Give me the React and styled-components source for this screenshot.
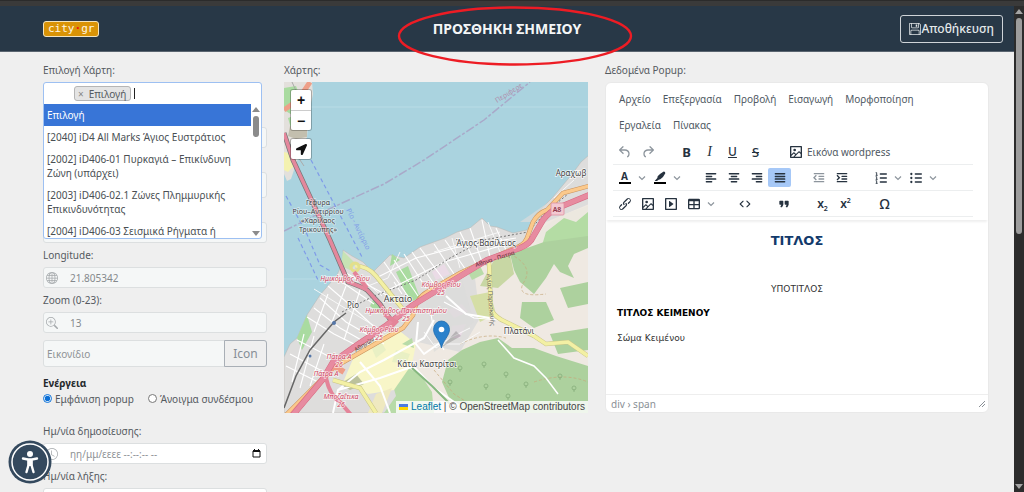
import React from "react";
import styled, { createGlobalStyle } from "styled-components";
import { BsGlobe, BsZoomIn, BsClock, BsFloppy } from "react-icons/bs";
import { FaLocationArrow } from "react-icons/fa";

const ui = '"Noto Sans", "Open Sans", sans-serif';

const Global = createGlobalStyle`
  *, *::before, *::after { box-sizing: border-box; }
  body { margin: 0; background: #efefef; color: #555a5f; font: 10px/16px ${ui}; }
  button, input { font: inherit; color: inherit; }
  button { cursor: pointer; }
`;

/* ---------- page frame ---------- */
const Shell = styled.div`
  height: 100vh;
  display: flex;
  flex-direction: column;
  overflow: hidden;
`;
const WindowEdge = styled.div`
  flex: none;
  height: 6px;
  background: #3a3a3a;
  border-top: 1px solid #2b2b2b;
`;
const Viewport = styled.div`
  flex: 1;
  min-height: 0;
  display: flex;
`;
const Page = styled.div`
  flex: 1;
  min-width: 0;
  overflow: hidden;
`;
const Scrollbar = styled.div`
  flex: none;
  width: 10px;
  padding: 3px 2px;
  background: #2c2c2c;
  display: flex;
  flex-direction: column;
  align-items: center;
  gap: 4px;
`;
const Thumb = styled.div`
  width: 6px;
  height: ${(p) => p.$size};
  border-radius: 3px;
  background: ${(p) => p.$color};
`;
const Arrow = styled.span`
  width: 0;
  height: 0;
  border: 4px solid transparent;
  border-top-width: ${(p) => (p.$up ? 0 : 5)}px;
  border-bottom-width: ${(p) => (p.$up ? 5 : 0)}px;
  border-top-color: ${(p) => p.$color};
  border-bottom-color: ${(p) => p.$color};
  margin-top: ${(p) => (p.$up ? 0 : "auto")};
`;

/* ---------- header ---------- */
const Header = styled.header`
  position: relative;
  display: grid;
  grid-template-columns: 1fr auto 1fr;
  align-items: center;
  height: 46px;
  padding: 0 11px 0 43px;
  background: #283847;
  border-bottom: 1px solid #5a6570;
  color: #f4f6f7;
`;
const Logo = styled.a`
  justify-self: start;
  display: flex;
  align-items: center;
  height: 16px;
  padding: 0 4px;
  border: 1px solid #f3e3bd;
  border-radius: 3px;
  background: #d99306;
  color: #fff6e0;
  font: 11px/14px "DejaVu Sans Mono", monospace;
  text-decoration: none;
  i { color: #f01010; font-style: normal; font-weight: 700; }
`;
const Title = styled.h1`
  margin: 0 32px 0 0;
  font-size: 14px;
  line-height: 20px;
  font-weight: 700;
`;
const SaveButton = styled.button`
  justify-self: end;
  display: flex;
  align-items: center;
  height: 28px;
  padding: 0 8px;
  border: 1px solid #cfd4d8;
  border-radius: 3px;
  background: transparent;
  color: #e4e8ea;
  font-size: 12px;
  font-weight: 500;
`;
const Ring = styled.svg`
  position: absolute;
  z-index: 5;
  top: 0;
  left: calc(50% - 110px);
  width: 236px;
  height: 62px;
  pointer-events: none;
`;

/* ---------- form column ---------- */
const Columns = styled.main`
  display: grid;
  grid-template-columns: minmax(0, 224fr) minmax(0, 304fr) minmax(0, 384fr);
  gap: 17px;
  align-items: start;
  padding: 10px 25px 24px 43px;
`;
const Stack = styled.div`
  display: flex;
  flex-direction: column;
  gap: 4px;
`;
const Caption = styled.label`
  display: block;
  height: 16px;
`;
const Control = styled.div`
  display: flex;
  align-items: center;
  height: ${(p) => (p.$tall ? 26 : 21)}px;
  padding: 0 5px 0 2px;
  border: 1px solid #dcdfe0;
  border-radius: 3px;
  background: ${(p) => (p.$plain ? "#fff" : "#f5f7f7")};
  color: #a4a8ab;
`;
const TextInput = styled.input`
  flex: 1;
  min-width: 0;
  height: 100%;
  padding: 0 0 0 ${(p) => (p.$icon ? 12 : 3)}px;
  border: 0;
  outline: 0;
  background: transparent;
  color: #85898c;
  &::placeholder { color: #8f9396; opacity: 1; }
`;
const IconGroup = styled.div`
  display: flex;
  height: 27px;
  margin-top: 3px;
  border: 1px solid #dcdfe0;
  border-radius: 3px;
  background: #f5f7f7;
`;
const IconButton = styled.button`
  width: 43px;
  margin: -1px;
  border: 1px solid #a9afb6;
  border-radius: 0 3px 3px 0;
  padding: 0;
  background: #efefef;
  color: #868e96;
  font-size: 12px;
`;
const Choice = styled.fieldset`
  margin: 4px 0 12px;
  padding: 0;
  border: 0;
  legend { height: 16px; padding: 0; font-weight: 700; color: #25292c; }
`;
const Options = styled.div`
  display: flex;
  gap: 14px;
  label { display: flex; align-items: center; height: 16px; white-space: nowrap; }
  input { width: 9px; height: 9px; margin: 0 3px 2px 0; accent-color: #0b6fd6; }
`;

/* ---------- open multi select ---------- */
const Anchor = styled.div`
  position: relative;
  height: 21px;
`;
const Combo = styled.div`
  position: absolute;
  z-index: 3;
  top: 0;
  left: 0;
  right: 5px;
  border: 1px solid #9dc0f2;
  border-radius: 3px;
  background: #fff;
`;
const ComboField = styled.div`
  display: flex;
  align-items: center;
  height: 21px;
  padding-left: 30px;
`;
const Chip = styled.span`
  display: flex;
  align-items: center;
  gap: 5px;
  height: 15px;
  padding: 0 4px 0 3px;
  border: 1px solid #b5b5b5;
  border-radius: 3px;
  background: #e4e4e4;
  button { padding: 0; border: 0; background: none; color: #888; line-height: 12px; }
`;
const Caret = styled.span`
  width: 1px;
  height: 11px;
  margin-left: 3px;
  background: #222;
`;
const Results = styled.div`
  display: flex;
  height: 134px;
`;
const List = styled.ul`
  flex: 1;
  min-width: 0;
  margin: 0;
  padding: 0;
  overflow: hidden;
  list-style: none;
`;
const Item = styled.li`
  padding: 4px 3px 4px 3px;
  line-height: 14px;
  background: ${(p) => (p.$active ? "#3875d7" : "transparent")};
  color: ${(p) => (p.$active ? "#fff" : "#4a4f54")};
`;
const ListScroll = styled.div`
  width: 10px;
  padding: 3px 0 2px;
  display: flex;
  flex-direction: column;
  align-items: center;
  gap: 4px;
`;

/* ---------- map ---------- */
const MapFrame = styled.div`
  position: relative;
  height: 331px;
  overflow: hidden;
  background: #aad3df;
  > svg { display: block; width: 100%; height: 100%; }
`;
const MapControls = styled.div`
  position: absolute;
  top: 8px;
  left: 7px;
  display: flex;
  flex-direction: column;
  gap: 9px;
`;
const MapBar = styled.div`
  display: flex;
  flex-direction: column;
  border-radius: 2px;
  overflow: hidden;
  box-shadow: 0 0 0 1px rgba(0, 0, 0, 0.25);
  button {
    display: grid;
    place-items: center;
    width: 20px;
    height: 20px;
    padding: 0;
    border: 0;
    background: #fff;
    color: #111;
    font: 700 14px/20px "Liberation Sans", sans-serif;
  }
  button + button { border-top: 1px solid #ccc; }
`;
const Attribution = styled.div`
  position: absolute;
  right: 0;
  bottom: 0;
  display: flex;
  align-items: center;
  gap: 3px;
  height: 12px;
  padding: 0 3px;
  background: rgba(255, 255, 255, 0.8);
  color: #444;
  font: 10px/12px "Liberation Sans", sans-serif;
  white-space: nowrap;
  a { color: #0078a8; text-decoration: none; }
`;

/* ---------- editor ---------- */
const Editor = styled.section`
  border: 1px solid #e9e9e9;
  border-radius: 6px;
  background: #fff;
  color: #4f5963;
`;
const EditorHead = styled.div`
  padding: 3px 15px 3px 7px;
  box-shadow: 0 3px 2px -1px #efefef;
`;
const MenuBar = styled.div`
  display: flex;
  flex-wrap: wrap;
  margin-bottom: 1px;
  padding-right: 36px;
  button { height: 26px; padding: 0 6px; border: 0; background: none; }
`;
const ToolRow = styled.div`
  display: flex;
  align-items: center;
  gap: 16px;
  height: 26px;
  border-bottom: 1px solid #eceeef;
`;
const ToolGroup = styled.div`
  display: flex;
  align-items: center;
`;
const Tool = styled.button`
  display: flex;
  align-items: center;
  justify-content: center;
  gap: 3px;
  min-width: ${(p) => (p.$arrow ? 12 : 23)}px;
  height: 19px;
  padding: ${(p) => (p.$wide ? "0 5px" : 0)};
  border: 0;
  border-radius: 2px;
  background: ${(p) => (p.$on ? "#a6c8f7" : "transparent")};
  color: ${(p) => (p.$dim || p.$arrow ? "#8d959d" : "#26323f")};
  white-space: nowrap;
  > span { color: #4f5963; }
`;
const Glyph = styled.b`
  font: ${(p) => p.$font || `700 13px/16px ${ui}`};
  text-decoration: ${(p) => p.$line || "none"};
  sub, sup { font-size: 7px; line-height: 0; }
`;
const ColorMark = styled.b`
  width: 12px;
  border-bottom: 2px solid #000;
  font: 700 10px/11px ${ui};
`;
const Canvas = styled.div`
  min-height: 174px;
  padding: 13px 11px 10px;
  color: #333;
  font: 9px/16px "DejaVu Sans", sans-serif;
  h2 { margin: 0 0 32px; color: #123a6b; font-size: 13px; line-height: 16px; text-align: center; }
  p { margin: 0 0 8px; }
  p:first-of-type { text-align: center; }
  h3 { margin: 0 0 9px; color: #000; font-size: 9px; line-height: 16px; }
`;
const StatusBar = styled.div`
  display: flex;
  justify-content: space-between;
  align-items: center;
  height: 18px;
  padding: 0 2px 0 5px;
  border-top: 1px solid #eee;
  color: #8a9096;
`;

const AccessButton = styled.button`
  position: fixed;
  z-index: 10;
  left: 8px;
  bottom: 8px;
  width: 44px;
  height: 44px;
  padding: 0;
  border: 0;
  border-radius: 50%;
  background: none;
  svg { display: block; }
`;

/* ---------- icons ---------- */
const Icon = ({ children, size = 16 }) => (
  <svg width={size} height={size} viewBox="0 0 24 24" fill="currentColor" aria-hidden="true">
    {children}
  </svg>
);
const Chevron = () => (
  <svg width="8" height="8" viewBox="0 0 8 8" fill="none" stroke="currentColor" strokeWidth="1.2" aria-hidden="true">
    <path d="M1 2.5 4 5.5 7 2.5" />
  </svg>
);
const Bars = ({ rows }) => (
  <Icon>
    {rows.map(([x, w], i) => (
      <rect key={i} x={x} y={4.5 + i * 4} width={w} height="2.2" rx="1" />
    ))}
  </Icon>
);
const UNDO =
  "M6.4 8H12c3.7 0 6.2 2 6.8 5.1.6 2.7-.4 5.6-2.3 6.8a1 1 0 0 1-1-1.8c1.1-.6 1.8-2.7 1.4-4.6-.5-2.1-2.1-3.5-4.9-3.5H6.4l3.3 3.3a1 1 0 1 1-1.4 1.4l-5-5a1 1 0 0 1 0-1.4l5-5a1 1 0 0 1 1.4 1.4L6.4 8Z";
const LINK =
  "M6.2 12.3a1 1 0 0 1 1.4 1.4l-2 2a2 2 0 1 0 2.6 2.8l4.8-4.8a1 1 0 0 0 0-1.4 1 1 0 1 1 1.4-1.3 2.9 2.9 0 0 1 0 4L9.6 20a3.9 3.9 0 0 1-5.5-5.5l2.1-2.2Zm11.6-.6a1 1 0 0 1-1.4-1.4l2-2a2 2 0 1 0-2.6-2.8L11 10.3a1 1 0 0 0 0 1.4A1 1 0 1 1 9.6 13a2.9 2.9 0 0 1 0-4L14.4 4a3.9 3.9 0 0 1 5.5 5.5l-2.1 2.2Z";
const IMAGE =
  "m5 15.7 3.3-3.2c.3-.3.7-.3 1 0L12 15l4.1-4c.3-.4.8-.4 1 0l1.9 1.9V5H5v10.7ZM5 18v1h3l2.8-2.9-2-2L5 18Zm14-3-2.5-2.4-6.4 6.4H19v-4ZM4 3h16c.6 0 1 .4 1 1v16c0 .6-.4 1-1 1H4a1 1 0 0 1-1-1V4c0-.6.4-1 1-1Zm6 8a2 2 0 1 0 0-4 2 2 0 0 0 0 4Z";
const MEDIA =
  "M4 3h16c.6 0 1 .4 1 1v16c0 .6-.4 1-1 1H4a1 1 0 0 1-1-1V4c0-.6.4-1 1-1Zm1 2v14h14V5H5Zm4.8 2.6 5.6 4a.5.5 0 0 1 0 .8l-5.6 4A.5.5 0 0 1 9 16V8a.5.5 0 0 1 .8-.4Z";
const TABLE =
  "M19 4a2 2 0 0 1 2 2v12a2 2 0 0 1-2 2H5a2 2 0 0 1-2-2V6c0-1.100.9-2 2-2h14ZM5 14v4h6v-4H5Zm14 0h-6v4h6v-4Zm0-6h-6v4h6V8ZM5 12h6V8H5v4Z";
const CODE =
  "M9.8 15.7c.3.3.3.8 0 1-.3.4-.9.4-1.2 0l-4.4-4.1a.8.8 0 0 1 0-1.2l4.4-4.2c.3-.3.9-.3 1.2 0 .3.3.3.8 0 1.1L6 12l3.8 3.7ZM14.2 15.7c-.3.3-.3.8 0 1 .4.4.9.4 1.2 0l4.4-4.1c.3-.3.3-.9 0-1.2l-4.4-4.2a.8.8 0 0 0-1.2 0c-.3.3-.3.8 0 1.1L18 12l-3.8 3.7Z";
const QUOTE =
  "M7.5 17h.9c.4 0 .7-.2.9-.6L11 13V8c0-.6-.4-1-1-1H6a1 1 0 0 0-1 1v4c0 .6.4 1 1 1h2l-1.3 2.7a1 1 0 0 0 .8 1.3Zm8 0h.9c.4 0 .7-.2.9-.6L19 13V8c0-.6-.4-1-1-1h-4a1 1 0 0 0-1 1v4c0 .6.4 1 1 1h2l-1.3 2.7a1 1 0 0 0 .8 1.3Z";

const Shift = ({ out }) => (
  <Icon>
    <rect x="4" y="4.5" width="16" height="2" rx="1" />
    <rect x="11" y="8.5" width="9" height="2" rx="1" />
    <rect x="11" y="12.5" width="9" height="2" rx="1" />
    <rect x="4" y="16.5" width="16" height="2" rx="1" />
    <path d={out ? "M8 8 4.5 11.5 8 15" : "M4.5 8 8 11.5 4.5 15"} fill="none" stroke="currentColor" strokeWidth="2" />
  </Icon>
);
const ListIcon = ({ numbered }) => (
  <Icon>
    {[6, 12, 18].map((y) => (
      <g key={y}>
        <rect x="10" y={y - 1} width="11" height="2" rx="1" />
        {numbered ? (
          <path d={`M4 ${y - 2}h1.5v4M4 ${y + 2}h3`} fill="none" stroke="currentColor" strokeWidth="1.3" />
        ) : (
          <circle cx="5" cy={y} r="1.7" />
        )}
      </g>
    ))}
  </Icon>
);

const Drop = ({ label }) => (
  <Tool $arrow aria-label={label}>
    <Chevron />
  </Tool>
);

/* ---------- map drawing ---------- */
const MOTORWAY = "M8 334 39 297 49 280 73 263 103 243 129 223 183 190 203 178 236 166Q246 162 249 155L259 138Q266 129 276 125L305 113";
const TRUNK = "M2 333 29 306 49 286 119 246 129 233Q132 216 143 210L176 191 226 168Q240 164 243 156L249 140Q254 131 263 128L279 111 305 104";
const BRIDGE = "M0 51 9 78 46 158 64 200Q76 204 83 208L96 222 106 237";
const roads = [
  "M36 216 62 240 100 262", "M23 235 50 252 74 264", "M52 196 90 222", "M60 190 108 216", "M100 180 128 220",
  "M120 172 142 206", "M136 166 160 198", "M150 162 170 192", "M161 158 182 188", "M176 150 192 182", "M198 138 206 175",
  "M212 146 222 168", "M44 212 30 250", "M62 204 48 240", "M76 208 60 258", "M92 196 132 176 170 166 232 156",
  "M100 210 160 180 230 160", "M13 258 48 276", "M6 272 40 290", "M2 284 34 300", "M20 252 8 300", "M30 254 16 306",
  "M40 262 26 304", "M110 200 118 212", "M146 226 150 250 160 268", "M160 220 190 236 216 238",
  "M30 226 56 246 88 264", "M44 204 74 230 98 252", "M110 178 134 214", "M128 170 150 202", "M186 146 198 180",
];
const blocks = ["M236 140 268 118 304 84 304 104 276 116 250 140Z", "M140 208 176 190 190 240 150 270Z"];
const places = [
  [34, 123, "Γέφυρα"], [34, 132, "Ρίου–Αντιρρίου"], [34, 141, "«Χαρίλαος"], [34, 150, "Τρικούπης»"],
];
const junctions = [
  [61, 199, "Ημικόμβος Ρίου"], [157, 205, "Κόμβος Ρίου"], [157, 213, "25"], [122, 231, "Ημικόμβος Πανεπιστημίου"],
  [122, 239, "25"], [95, 250, "Κόμβος Ρίου"], [95, 258, "25"], [55, 277, "Πάτρα Α"], [55, 285, "26"],
  [42, 294, "Πάτρα Α"], [57, 317, "Μποζαΐτικα"], [57, 325, "26"],
];
const towns = [[202, 164, "Άγιος Βασίλειος", 8], [114, 220, "Ακταίο", 9], [69, 226, "Ρίο", 8], [143, 285, "Κάτω Καστρίτσι", 8], [235, 252, "Πλατάνι", 8], [287, 94, "Αραχωβ", 8]];

const MapArt = () => (
  <svg viewBox="0 0 304 331" preserveAspectRatio="xMidYMid slice" role="img" aria-label="Χάρτης Ρίου" fontFamily='"Noto Sans", sans-serif'>
    <rect width="304" height="331" fill="#aad3df" />
    <path d="M0 25H304M0 197H60" stroke="#b9dce6" strokeWidth="1" />
    {/* northern shore */}
    <path d="M0 0H28L29 12 25 30 23 55 16 71 11 85 7 97 3 99 0 92Z" fill="#e3e0dc" />
    <path d="M0 6 12 4 18 20 10 34 0 28ZM4 36 20 30 18 46 8 50Z" fill="#a9dba0" />
    <path d="M6 44 23 46 23 55 12 57 4 54Z" fill="#c3bfae" />
    <path d="M0 70 8 72 12 82 4 90 0 88Z" fill="#f4f2b0" />
    <path d="M0 28 14 18 26 0" fill="none" stroke="#ee9f88" strokeWidth="5" />
    <path d="M6 62 12 72 20 84M8 0 20 26" fill="none" stroke="#aaa" strokeWidth="1" />
    {/* sea lines */}
    <path d="M0 149 34 132 100 102 140 78 200 38 246 0" fill="none" stroke="#a9a9c9" strokeWidth="1.5" strokeDasharray="9 2 3 2" />
    <path d="M2 114 22 150 36 183 48 190M27 78 56 133 78 175M14 156 34 198" fill="none" stroke="#7f9be8" strokeWidth="1.2" strokeDasharray="4 3" />
    {/* mainland */}
    <path d="M305 73 297 80 289 91 279 103 269 115 256 128 243 148 229 151 213 145 206 144 198 136 186 146 173 150 161 156 136 165 120 176 106 173 89 190 79 180 68 174 59 168 59 180 53 193 36 213 23 233 13 256 6 262 0 275V331H305Z" fill="#dedddc" stroke="#b9b5b0" strokeWidth="0.5" />
    <path d="M59 169 67 177 72 182 66 188 57 184Z" fill="#c7e3b4" />
    <path d="M23 233 13 256 18 268 28 250Z" fill="#a9dba0" />
    <path d="M190 188 236 168 262 140 305 122V331H150L120 285 134 260 176 270 196 236Z" fill="#efe9e2" />
    <path d="M259 146 276 134 304 124V162L276 170 252 160Z" fill="#ece8df" />
    <path d="M262 150 280 136 292 140 304 130V160L284 172 268 166 256 170Z" fill="#b4dca4" />
    <path d="M226 172 260 160 304 154V166L290 172 284 184 290 196 276 190 270 182 262 196 250 212 236 200 230 188Z" fill="#add19e" />
    <path d="M238 220 262 220 270 238 250 246 236 236Z" fill="#add19e" />
    <path d="M276 206 304 200V222L284 226Z" fill="#add19e" />
    <path d="M266 252 304 246V268L274 272Z" fill="#add19e" />
    <path d="M210 178 226 172 230 192 214 206 196 204Z" fill="#c8d7a4" />
    <path d="M186 214 206 210 212 232 196 240Z" fill="#d5dea6" />
    <path d="M158 300 164 278 178 268 196 260 214 256 228 266 250 266 272 274 304 284V331H184L166 318Z" fill="#add19e" />
    <path d="M108 300 124 286 136 292 148 310 150 331H100L112 314Z" fill="#b8dba8" />
    <path d="M72 270 112 246 132 262 128 282 110 308 84 312 60 298Z" fill="#f8f6c8" />
    <path d="M86 262 96 258 102 268 92 276ZM112 268 126 272 122 282 108 280Z" fill="#e9f0c4" />
    <path d="M112 190 124 184 136 216 126 220ZM90 216 100 226 96 232 86 224ZM108 172 116 178 106 184Z" fill="#a9dba0" />
    <path d="M148 190 160 182 166 192 152 198ZM168 244 182 242 176 256 166 256ZM164 228 178 222 184 230 170 236Z" fill="#eadbe6" />
    <path d="M184 190 196 184 200 192 188 198ZM118 262 128 256 130 266Z" fill="#b8dba8" />
    <path d="M56 302 72 292 80 302 66 308Z" fill="#bcc29c" />
    <path d="M92 312 108 306 98 331H84Z" fill="#efe9c0" />
    {blocks.map((d) => <path key={d} d={d} fill="#dcdbda" opacity="0.7" />)}
    <path d="M226 172Q250 184 240 200T262 212M250 300Q280 290 304 300M176 262Q200 250 222 256M150 288 170 312 200 331" fill="none" stroke="#c6a77b" strokeWidth="0.7" strokeDasharray="3 2" />
    {roads.map((d) => <path key={d} d={d} fill="none" stroke="#fff" strokeWidth="1.1" />)}
    <path d="M30 207 64 228 94 246M70 190 98 214M84 204 104 196 116 170M150 170 216 150M168 156 176 186M270 116 290 98M262 126 284 108M204 140 216 170M140 250 152 266 166 256 186 246M150 262 176 262 196 250" fill="none" stroke="#fafafa" strokeWidth="0.9" />
    <path d="M49 331 54 308 76 290 100 278 140 256 150 238M76 280 96 304 106 331M54 308 96 296 130 284M134 240 132 262 140 272 160 258M129 284 150 306 176 324M162 214 182 232 206 236" fill="none" stroke="#fff" strokeWidth="2" />
    <path d="M128 286 148 304 166 322" fill="none" stroke="#86b880" strokeWidth="2" />
    <path d="M214 258 230 276 250 284 262 296 274 312" fill="none" stroke="#fff" strokeWidth="1.5" />
    <path d="M58 230 90 214 132 198 166 176 200 158 244 150 262 130 284 112" fill="none" stroke="#777" strokeWidth="1" strokeDasharray="2 2" />
    <path d="M0 326 12 294 26 268 50 240 62 231" fill="none" stroke="#666" strokeWidth="1.5" />
    <circle cx="50" cy="241" r="2" fill="#5577a8" />
    <circle cx="26" cy="274" r="1.5" fill="#5577a8" />
    <path d="M71 184Q84 184 92 194L118 226M205 180 207 228Q212 236 222 240L250 254 262 262 284 260 304 274M49 298 76 306 92 331" fill="none" stroke="#c9c588" strokeWidth="4.5" />
    <path d="M71 184Q84 184 92 194L118 226M205 180 207 228Q212 236 222 240L250 254 262 262 284 260 304 274M49 298 76 306 92 331" fill="none" stroke="#f3f0a4" strokeWidth="3.5" />
    <circle cx="71" cy="185" r="4" fill="none" stroke="#e3df8c" strokeWidth="3" />
    <path d={TRUNK} fill="none" stroke="#c9925c" strokeWidth="4.5" />
    <path d={TRUNK} fill="none" stroke="#fbc98c" strokeWidth="3.5" />
    <path d="M8 333 50 284 60 290" fill="none" stroke="#ef9c86" strokeWidth="6" />
    <path d={BRIDGE} fill="none" stroke="#777" strokeWidth="5" />
    <path d={BRIDGE} fill="none" stroke="#e4879c" strokeWidth="3.5" />
    <path d={MOTORWAY} fill="none" stroke="#d66a82" strokeWidth="6" />
    <path d={MOTORWAY} fill="none" stroke="#e78ba0" strokeWidth="5" />
    <path d="M42 296Q46 314 56 320L68 334M100 232 112 240 104 248M70 190 83 206" fill="none" stroke="#e48499" strokeWidth="4" />
    {[[176, 290], [200, 286], [222, 296], [166, 304], [202, 308], [224, 318], [242, 306], [276, 298], [290, 310]].map(([x, y]) => (
      <path key={`${x}-${y}`} d={`M${x} ${y}v-3m-2-1q0-2 2-2t2 2-2 2-2-2`} fill="none" stroke="#86ad7b" strokeWidth="0.8" />
    ))}
    <g fontSize="7" textAnchor="middle" fill="#444" stroke="#fff" strokeOpacity="0.5" strokeWidth="1.5" paintOrder="stroke">
      {places.map(([x, y, t]) => <text key={t} x={x} y={y}>{t}</text>)}
      {towns.map(([x, y, t, s]) => <text key={t} x={x} y={y} fontSize={s} strokeOpacity="0.8">{t}</text>)}
    </g>
    <g fontSize="7" fontStyle="italic" textAnchor="middle" fill="#cf4460" stroke="#fff" strokeOpacity="0.7" strokeWidth="1.5" paintOrder="stroke">
      {junctions.map(([x, y, t], i) => <text key={i} x={x} y={y}>{t}</text>)}
    </g>
    <text fontSize="7" fill="#b090ae" transform="translate(213 21) rotate(-32)">Περιφερε</text>
    <text fontSize="7" fill="#7f9be8" transform="translate(62 128) rotate(63)">Ρίο - Αντίρριο</text>
    <text fontSize="6" fill="#5c2a34" transform="translate(192 185) rotate(-18)">Αθηνα - Πατρα</text>
    <text fontSize="6" fill="#5c3a34" transform="translate(72 270) rotate(-32)">Αθηνών</text>
    <text fontSize="6" fill="#666" transform="translate(203 192) rotate(86)">Αγίας Παρασκευής</text>
    <rect x="267" y="121" width="13" height="12" rx="1" fill="#f3c9d1" stroke="#dd8fa0" strokeWidth="0.8" />
    <text x="273" y="130" fontSize="7" fontWeight="600" textAnchor="middle" fill="#8d3548">A8</text>
    <path d="M158 265 172 249 177 254Z" fill="#000" opacity="0.18" />
    <path d="M157.5 266C156 258 149.5 254 149.5 247.5A8 8.500 0 0 1 165.5 247.5C165.5 254 159 258 157.5 266Z" fill="#2a81cb" stroke="#1f6aab" strokeWidth="0.8" />
    <circle cx="157.5" cy="247.5" r="2.8" fill="#fff" />
  </svg>
);

const entries = [
  "Επιλογή",
  "[2040] iD4 All Marks Άγιος Ευστράτιος",
  "[2002] iD406-01 Πυρκαγιά – Επικίνδυνη Ζώνη (υπάρχει)",
  "[2003] iD406-02.1 Ζώνες Πλημμυρικής Επικινδυνότητας",
  "[2004] iD406-03 Σεισμικά Ρήγματα ή",
];
const menus = ["Αρχείο", "Επεξεργασία", "Προβολή", "Εισαγωγή", "Μορφοποίηση", "Εργαλεία", "Πίνακας"];

const Field = ({ id, label, icon, tall, plain, end, ...input }) => (
  <>
    <Caption htmlFor={id}>{label}</Caption>
    <Control $tall={tall} $plain={plain}>
      {icon}
      <TextInput id={id} $icon={!!icon} {...input} />
      {end}
    </Control>
  </>
);

const CalendarIcon = () => (
  <svg width="9" height="9" viewBox="0 0 9 9" aria-hidden="true">
    <path d="M1 2H8V8H1Z" fill="none" stroke="#111" />
    <path d="M1 1H8V3H1ZM2 0H3V2H2ZM6 0H7V2H6Z" fill="#111" />
  </svg>
);

export default function App() {
  return (
    <Shell>
      <Global />
      <WindowEdge />
      <Viewport>
        <Page>
          <Header>
            <Logo href="#">city<i>·</i>gr</Logo>
            <Title>ΠΡΟΣΘΗΚΗ ΣΗΜΕΙΟΥ</Title>
            <SaveButton><BsFloppy size={12} />Αποθήκευση</SaveButton>
            <Ring viewBox="0 0 236 62" aria-hidden="true">
              <ellipse cx="118" cy="30" rx="116" ry="28.5" fill="none" stroke="#ed1c24" strokeWidth="2.4" />
            </Ring>
          </Header>

          <Columns>
            <Stack>
              <Caption htmlFor="map-choice">Επιλογή Χάρτη:</Caption>
              <Anchor>
                <Combo>
                  <ComboField>
                    <Chip><button aria-label="Αφαίρεση">×</button>Επιλογή</Chip>
                    <Caret />
                    <TextInput id="map-choice" />
                  </ComboField>
                  <Results>
                    <List>
                      {entries.map((e, i) => <Item key={e} $active={i === 0}>{e}</Item>)}
                    </List>
                    <ListScroll aria-hidden="true">
                      <Arrow $up $color="#8b8b8b" />
                      <Thumb $size="21px" $color="#8b8b8b" />
                      <Arrow $color="#8b8b8b" />
                    </ListScroll>
                  </Results>
                </Combo>
              </Anchor>
              <Field id="name" label="" />
              <Field id="address" label="" tall />
              <Field id="lat" label="" />
              <Field id="lng" label="Longitude:" icon={<BsGlobe size={12} />} defaultValue="21.805342" />
              <Field id="zoom" label="Zoom (0-23):" icon={<BsZoomIn size={12} />} defaultValue="13" />
              <IconGroup>
                <TextInput aria-label="Εικονίδιο" placeholder="Εικονίδιο" />
                <IconButton>Icon</IconButton>
              </IconGroup>
              <Choice>
                <legend>Ενέργεια</legend>
                <Options>
                  <label><input type="radio" name="action" defaultChecked />Εμφάνιση popup</label>
                  <label><input type="radio" name="action" />Άνοιγμα συνδέσμου</label>
                </Options>
              </Choice>
              <Field id="from" label="Ημ/νία δημοσίευσης:" plain icon={<BsClock size={12} />} placeholder="ηη/μμ/εεεε --:--:-- --" end={<CalendarIcon />} />
              <Field id="to" label="Ημ/νία λήξης:" plain icon={<BsClock size={12} />} placeholder="ηη/μμ/εεεε --:--:-- --" end={<CalendarIcon />} />
            </Stack>

            <Stack>
              <Caption as="span">Χάρτης:</Caption>
              <MapFrame>
                <MapArt />
                <MapControls>
                  <MapBar>
                    <button aria-label="Μεγέθυνση">+</button>
                    <button aria-label="Σμίκρυνση">−</button>
                  </MapBar>
                  <MapBar>
                    <button aria-label="Η θέση μου"><FaLocationArrow size={11} /></button>
                  </MapBar>
                </MapControls>
                <Attribution>
                  <svg width="9" height="6" viewBox="0 0 9 6" aria-hidden="true">
                    <path d="M0 0H9V3H0Z" fill="#4c7be1" />
                    <path d="M0 3H9V6H0Z" fill="#ffd500" />
                  </svg>
                  <span><a href="#">Leaflet</a> | © OpenStreetMap contributors</span>
                </Attribution>
              </MapFrame>
            </Stack>

            <Stack>
              <Caption as="span">Δεδομένα Popup:</Caption>
              <Editor>
                <EditorHead>
                  <MenuBar>{menus.map((m) => <button key={m}>{m}</button>)}</MenuBar>
                  <ToolRow>
                    <ToolGroup>
                      <Tool $dim aria-label="Αναίρεση"><Icon><path d={UNDO} /></Icon></Tool>
                      <Tool $dim aria-label="Επανάληψη"><Icon><path d={UNDO} transform="matrix(-1 0 0 1 24 0)" /></Icon></Tool>
                    </ToolGroup>
                    <ToolGroup>
                      <Tool><Glyph>B</Glyph></Tool>
                      <Tool><Glyph $font='italic 400 14px/16px "Liberation Serif", serif'>I</Glyph></Tool>
                      <Tool><Glyph $font={`500 12px/16px ${ui}`} $line="underline">U</Glyph></Tool>
                      <Tool><Glyph $font={`500 13px/16px ${ui}`} $line="line-through">S</Glyph></Tool>
                    </ToolGroup>
                    <ToolGroup>
                      <Tool $wide><Icon><path fillRule="evenodd" d={IMAGE} /></Icon><span>Εικόνα wordpress</span></Tool>
                    </ToolGroup>
                  </ToolRow>
                  <ToolRow>
                    <ToolGroup>
                      <Tool><ColorMark>A</ColorMark></Tool>
                      <Drop label="Χρώμα κειμένου" />
                      <Tool aria-label="Επισήμανση">
                        <Icon>
                          <path d="M3 18h18v3H3z" fill="#000" />
                          <path d="M7.5 16.5 4 16.5 8 12 8.5 9.5 12 6 17 2.5Q20 2 20 5L16.5 10.5 12.5 14 10 14.5Z" />
                        </Icon>
                      </Tool>
                      <Drop label="Χρώμα φόντου" />
                    </ToolGroup>
                    <ToolGroup>
                      <Tool aria-label="Αριστερά"><Bars rows={[[4, 16], [4, 10], [4, 16], [4, 10]]} /></Tool>
                      <Tool aria-label="Κέντρο"><Bars rows={[[4, 16], [7, 10], [4, 16], [7, 10]]} /></Tool>
                      <Tool aria-label="Δεξιά"><Bars rows={[[4, 16], [10, 10], [4, 16], [10, 10]]} /></Tool>
                      <Tool $on aria-label="Πλήρης"><Bars rows={[[4, 16], [4, 16], [4, 16], [4, 16]]} /></Tool>
                    </ToolGroup>
                    <ToolGroup>
                      <Tool $dim aria-label="Μείωση εσοχής"><Shift out /></Tool>
                      <Tool aria-label="Αύξηση εσοχής"><Shift /></Tool>
                    </ToolGroup>
                    <ToolGroup>
                      <Tool aria-label="Αρίθμηση"><ListIcon numbered /></Tool>
                      <Drop label="Στυλ αρίθμησης" />
                      <Tool aria-label="Κουκκίδες"><ListIcon /></Tool>
                      <Drop label="Στυλ κουκκίδων" />
                    </ToolGroup>
                  </ToolRow>
                  <ToolRow>
                    <ToolGroup>
                      <Tool aria-label="Σύνδεσμος"><Icon><path d={LINK} /></Icon></Tool>
                      <Tool aria-label="Εικόνα"><Icon><path fillRule="evenodd" d={IMAGE} /></Icon></Tool>
                      <Tool aria-label="Πολυμέσα"><Icon><path fillRule="evenodd" d={MEDIA} /></Icon></Tool>
                      <Tool aria-label="Πίνακας"><Icon><path fillRule="evenodd" d={TABLE} /></Icon></Tool>
                      <Drop label="Επιλογές πίνακα" />
                    </ToolGroup>
                    <ToolGroup>
                      <Tool aria-label="Κώδικας"><Icon><path d={CODE} /></Icon></Tool>
                    </ToolGroup>
                    <ToolGroup>
                      <Tool aria-label="Παράθεση"><Icon><path d={QUOTE} /></Icon></Tool>
                    </ToolGroup>
                    <ToolGroup>
                      <Tool><Glyph $font={`600 12px/16px ${ui}`}>x<sub>2</sub></Glyph></Tool>
                      <Tool><Glyph $font={`600 12px/16px ${ui}`}>x<sup>2</sup></Glyph></Tool>
                    </ToolGroup>
                    <ToolGroup>
                      <Tool><Glyph $font={`500 14px/16px ${ui}`}>Ω</Glyph></Tool>
                    </ToolGroup>
                  </ToolRow>
                </EditorHead>
                <Canvas>
                  <h2>ΤΙΤΛΟΣ</h2>
                  <p>ΥΠΟΤΙΤΛΟΣ</p>
                  <h3>ΤΙΤΛΟΣ ΚΕΙΜΕΝΟΥ</h3>
                  <p>Σώμα Κειμένου</p>
                </Canvas>
                <StatusBar>
                  <span>div › span</span>
                  <svg width="8" height="8" viewBox="0 0 8 8" fill="none" stroke="#8a9096" aria-hidden="true">
                    <path d="M1 7 7 1M4 7 7 4" />
                  </svg>
                </StatusBar>
              </Editor>
            </Stack>
          </Columns>
        </Page>
        <Scrollbar aria-hidden="true">
          <Arrow $up $color="#a5a5a5" />
          <Thumb $size="45%" $color="#9d9d9d" />
          <Arrow $color="#a5a5a5" />
        </Scrollbar>
      </Viewport>
      <AccessButton aria-label="Προσβασιμότητα">
        <svg width="44" height="44" viewBox="0 0 44 44">
          <circle cx="22" cy="22" r="21.5" fill="#34495e" />
          <circle cx="22" cy="22" r="18" fill="none" stroke="#fff" strokeWidth="1.5" />
          <circle cx="22" cy="14" r="3" fill="#fff" />
          <path d="M15 18.5 20 19.5H24L29 18.5M20.5 20V25L18.5 32M23.5 20V25L25.5 32" fill="none" stroke="#fff" strokeWidth="2.4" strokeLinecap="round" />
          <path d="M19.5 19.5H24.5V26H19.5Z" fill="#fff" />
        </svg>
      </AccessButton>
    </Shell>
  );
}
